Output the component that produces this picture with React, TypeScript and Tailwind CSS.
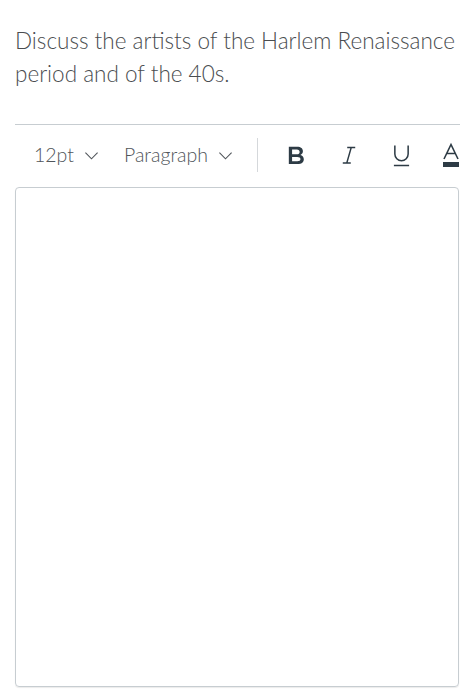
import React from 'react';

const Chevron = () => (
  <svg width="15" height="15" viewBox="0 0 16 16" fill="none" stroke="currentColor" strokeWidth="1.2">
    <path d="M1.5 5 L8 11.5 L14.5 5" />
  </svg>
);

const App: React.FC = () => {
  return (
    <div className="w-[466px] h-[700px] bg-white pl-[15px] pt-[24px] overflow-hidden" style={{ fontFamily: 'Lato, "Open Sans", sans-serif' }}>
      <p className="text-[22.5px] leading-[33px] font-light text-[#4a4d50] whitespace-nowrap">
        Discuss the artists of the Harlem Renaissance
        <br />
        period and of the 40s.
      </p>

      <div className="mt-[34px] border-t border-[#c7cdd1] w-[445px]">
        <div className="flex items-center h-[60px] pl-[19px] text-[#50555a]">
          <button className="flex shrink-0 items-center gap-[10px] text-[19.5px] font-light">
            <span>12pt</span>
            <Chevron />
          </button>
          <button className="flex shrink-0 items-center gap-[10px] text-[19.5px] font-light ml-[25px]">
            <span>Paragraph</span>
            <Chevron />
          </button>
          <div className="ml-[24px] shrink-0 w-px h-[34px] bg-[#d5d8db]" />
          <div className="flex shrink-0 items-center ml-[29px] text-[#2d3b45] whitespace-nowrap">
            <svg className="shrink-0" width="20" height="24" viewBox="0 0 22 24" fill="currentColor">
              <path d="M2 3h9.2c4 0 6.3 1.9 6.3 5 0 2-1.1 3.4-2.8 4 2.3.5 3.8 2.2 3.8 4.6 0 3.4-2.6 5.4-6.8 5.4H2V3zm3.6 3v5.2h5.2c2 0 3.1-1 3.1-2.6S12.8 6 10.8 6H5.6zm0 8.1V19h5.7c2.3 0 3.5-.9 3.5-2.5s-1.2-2.4-3.5-2.4H5.6z" />
            </svg>
            <svg className="ml-[34px] shrink-0" width="16" height="24" viewBox="0 0 18 24" fill="none" stroke="currentColor" strokeWidth="1.6">
              <path d="M7 3.5h9 M2 21h9 M11.5 3.5 L6.5 21" />
            </svg>
            <svg className="ml-[35px] shrink-0" width="19" height="26" viewBox="0 0 20 26" fill="none" stroke="currentColor" strokeWidth="1.6">
              <path d="M3 3v9a7 7 0 0 0 14 0V3 M2 24h16" />
            </svg>
            <svg className="ml-[31px] shrink-0" width="18" height="26" viewBox="0 0 18 26" fill="none" stroke="currentColor" strokeWidth="1.6">
              <path d="M2 17 L9 2.5 L16 17 M4.8 11.5h8.4" />
              <rect x="1" y="20" width="16" height="5" fill="currentColor" stroke="none" />
            </svg>
          </div>
        </div>
      </div>

      <div className="mt-[2px] w-[444px] h-[500px] rounded-[4px] border border-[#c7cdd1] shadow-[0_1px_1px_rgba(0,0,0,0.08)]" />
    </div>
  );
};

export default App;
